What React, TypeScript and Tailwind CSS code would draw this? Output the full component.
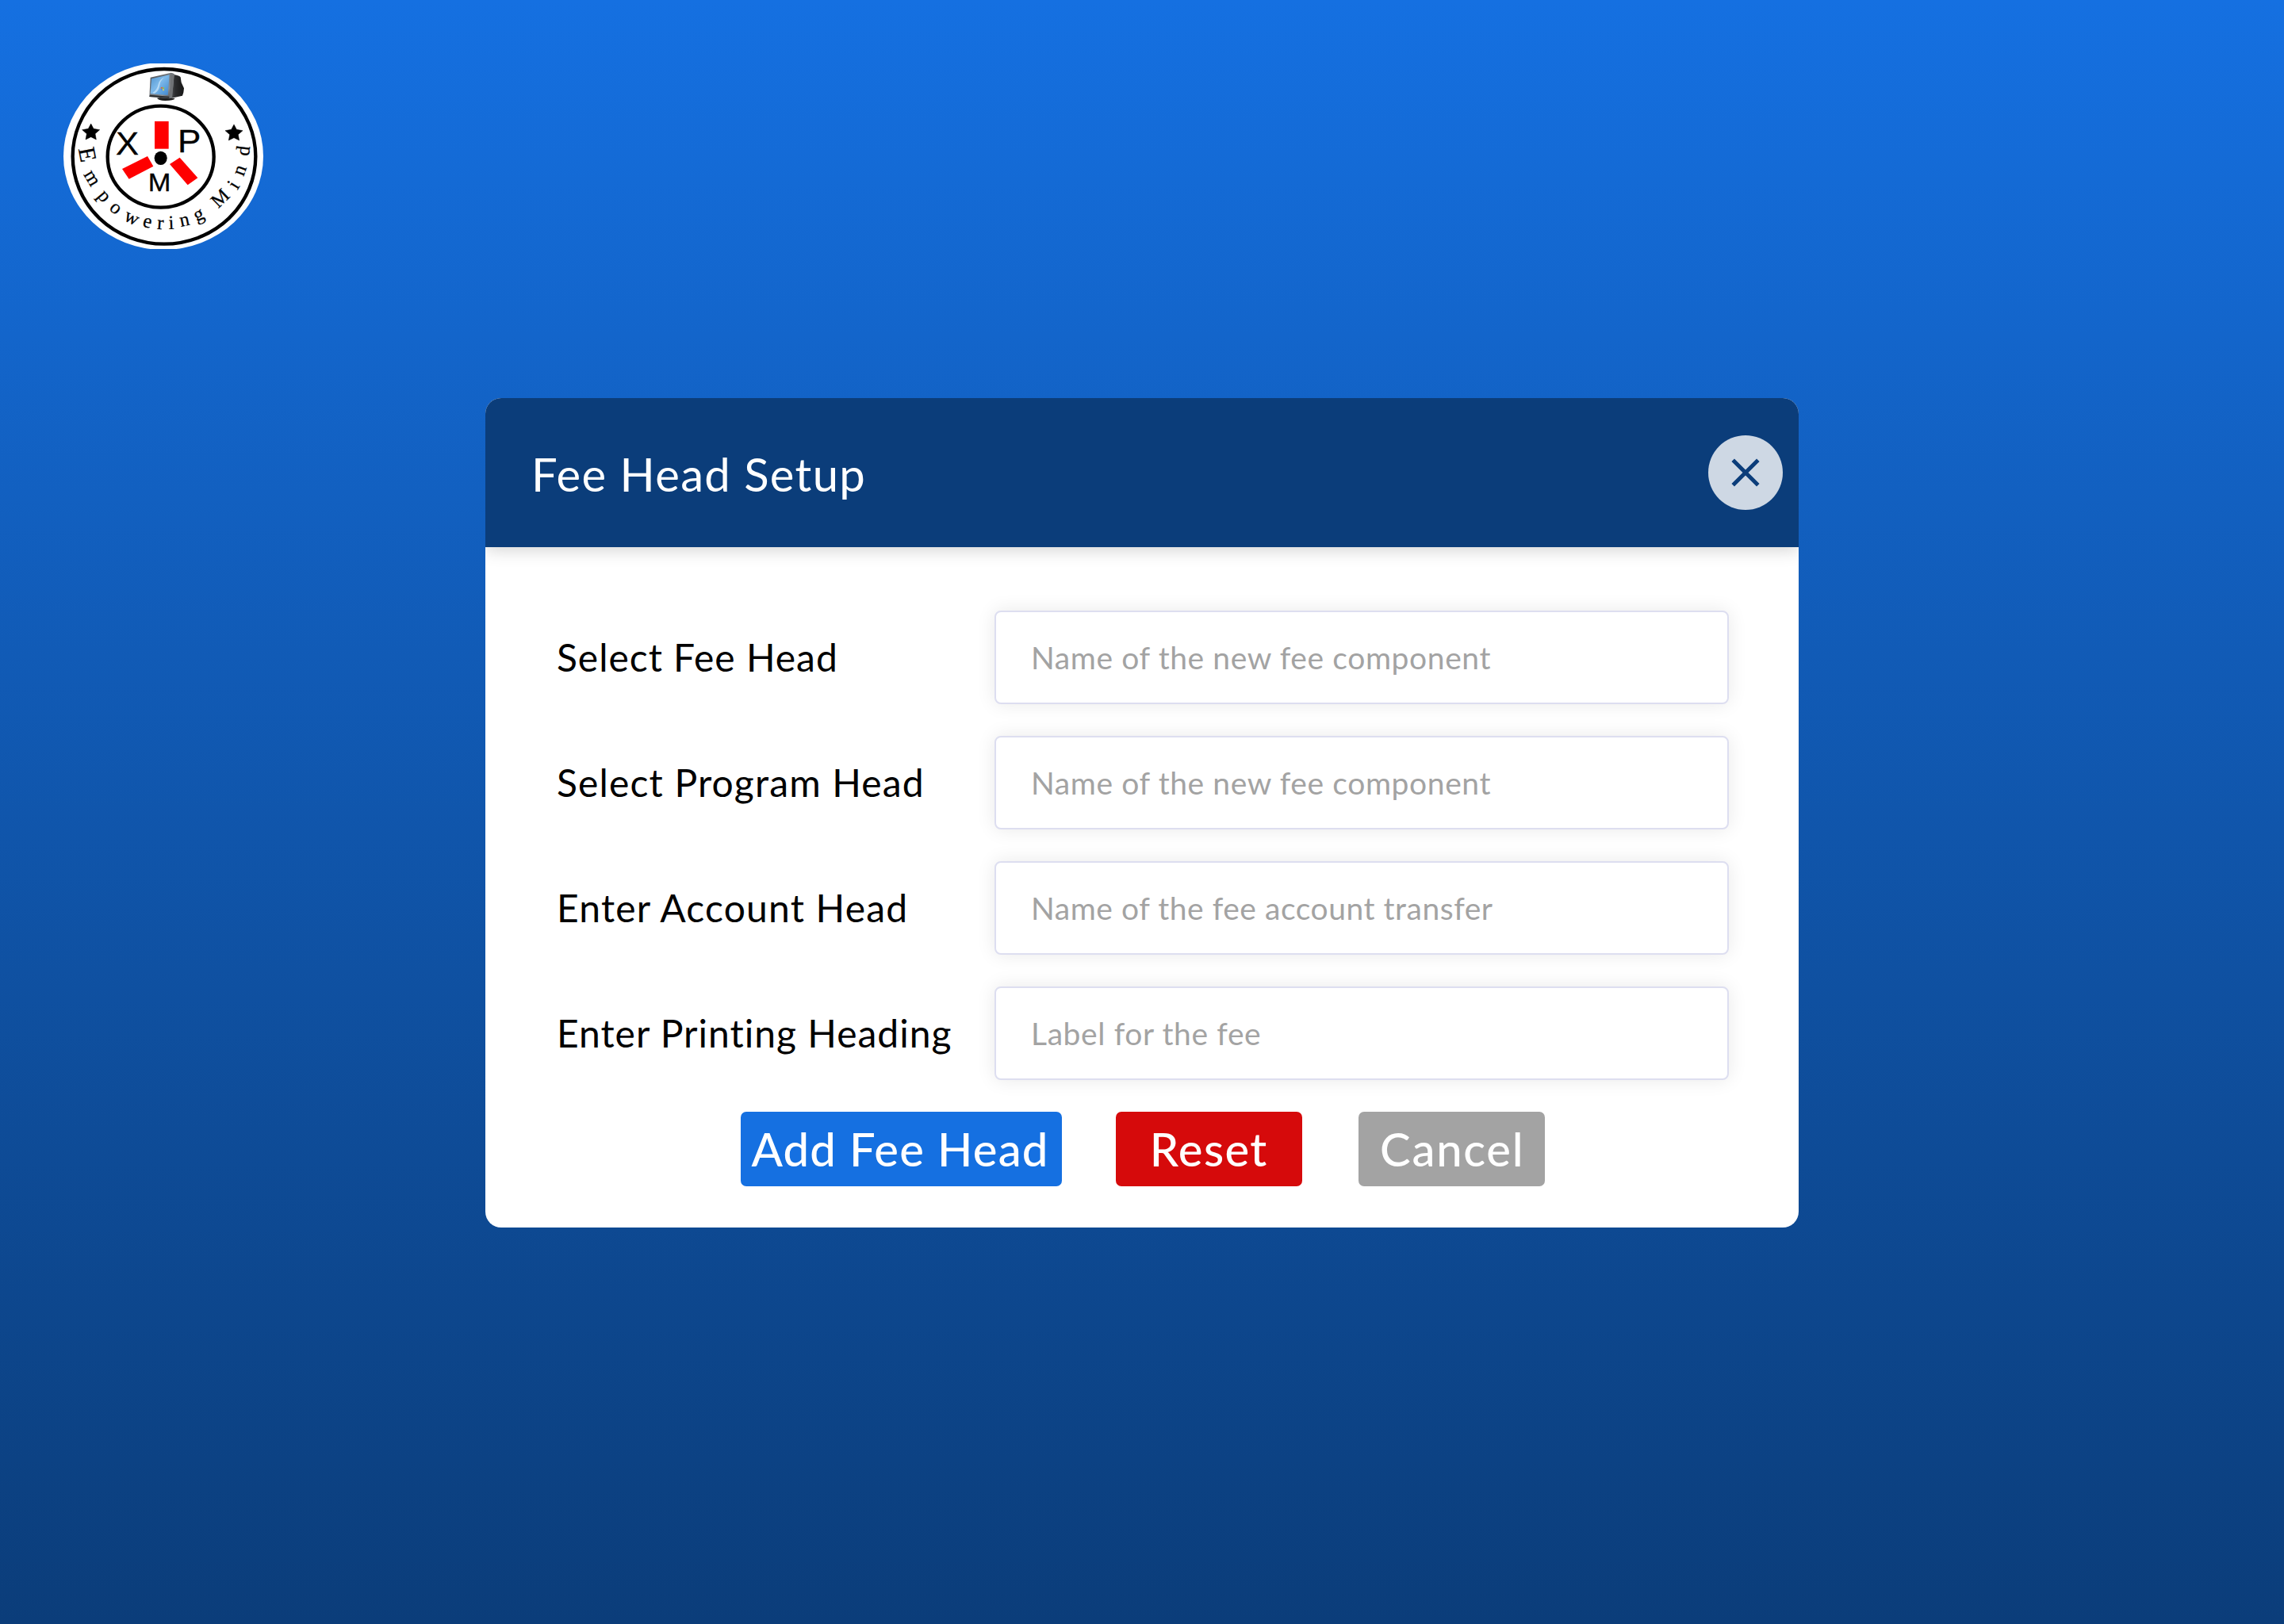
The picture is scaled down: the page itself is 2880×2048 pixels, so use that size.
type Field = { label: string; placeholder: string; labelTracking: string; hintTracking: string };

const fields: Field[] = [
  {
    label: "Select Fee Head",
    placeholder: "Name of the new fee component",
    labelTracking: "tracking-[0.96px]",
    hintTracking: "tracking-[0.6px]",
  },
  {
    label: "Select Program Head",
    placeholder: "Name of the new fee component",
    labelTracking: "tracking-[1.15px]",
    hintTracking: "tracking-[0.6px]",
  },
  {
    label: "Enter Account Head",
    placeholder: "Name of the fee account transfer",
    labelTracking: "tracking-[1.2px]",
    hintTracking: "tracking-[0.54px]",
  },
  {
    label: "Enter Printing Heading",
    placeholder: "Label for the fee",
    labelTracking: "tracking-[1px]",
    hintTracking: "tracking-[0.6px]",
  },
];

/* Baseline start (x, y) and rotation in degrees of each letter of the badge's motto. */
const motto: [number, number, number][] = [
  [86, 353, 79],
  [105, 450, 59],
  [156, 532, 50],
  [200, 581, 40],
  [255, 622, 26],
  [327, 646, 14],
  [383, 656, 4],
  [428, 657, -2],
  [474, 648, -12],
  [533, 629, -24],
  [580, 605, -30],
  [616, 580, -44],
  [688, 511, -58],
  [711, 459, -70],
  [731, 382, -83],
];

function Star({ x, y }: { x: number; y: number }) {
  return (
    <path
      transform={`translate(${x} ${y})`}
      d="M0-31 10-12 33-8 16 7 20 29 0 19-20 29-16 7-33-8-10-12Z"
      fill="#000"
      stroke="#000"
      strokeWidth="1.5"
    />
  );
}

function Computer() {
  return (
    <g>
      <defs>
        <linearGradient id="screen" x1="0" y1="0" x2="1" y2="1">
          <stop offset="0" stopColor="#4f93cf" />
          <stop offset="0.45" stopColor="#7db9ea" />
          <stop offset="1" stopColor="#3f86cc" />
        </linearGradient>
        <linearGradient id="bezel" x1="0" y1="0" x2="1" y2="1">
          <stop offset="0" stopColor="#4a4f55" />
          <stop offset="0.7" stopColor="#8b8f93" />
          <stop offset="1" stopColor="#3a3c3f" />
        </linearGradient>
        <linearGradient id="case" x1="0" y1="0" x2="1" y2="0">
          <stop offset="0" stopColor="#5d5f62" />
          <stop offset="0.4" stopColor="#2c2d2f" />
          <stop offset="1" stopColor="#161616" />
        </linearGradient>
      </defs>
      <path d="M384 161Q405 156 430 158L452 163Q446 171 415 171 388 170 384 161Z" fill="#1f1f1f" />
      <path d="M445 72Q466 74 473 82L476 102 486 124 484 140 480 152 446 160 430 160Z" fill="url(#case)" />
      <path d="M359 83 437 65 449 70 441 160 430 163 355 156Z" fill="url(#bezel)" />
      <path d="M437 65 449 70 441 160 430 163Z" fill="#707376" />
      <path d="M363 88 431 73 425 150 359 145Z" fill="url(#screen)" />
      <path d="M366 142Q385 130 389 108 392 92 412 82 394 98 394 114 391 135 374 144Z" fill="#c9e5fa" opacity=".75" />
      <path d="M399 120 405 119 404 125 398 125Z" fill="#e0663a" />
      <path d="M406 120 412 121 411 127 405 126Z" fill="#8cc152" />
      <path d="M398 126 404 127 404 132 398 131Z" fill="#4a90e2" />
      <path d="M405 127 411 128 410 133 405 132Z" fill="#f6d13c" />
      <path d="M357 149 430 155 430 161 355 156Z" fill="#2f3133" />
    </g>
  );
}

function Logo() {
  return (
    <svg viewBox="30 30 756 702" className="h-[234px] w-[252px] overflow-hidden" aria-label="XPM Empowering Mind">
      <ellipse cx="408" cy="381" rx="378" ry="354" fill="#fff" />
      <ellipse cx="411" cy="382" rx="346" ry="331" fill="none" stroke="#000" strokeWidth="13" />
      <ellipse cx="398" cy="383" rx="201" ry="192" fill="none" stroke="#000" strokeWidth="13" />
      <Computer />
      <Star x={134} y={289} />
      <Star x={675} y={292} />
      <path d="M375 249H428V353H375Z" fill="#f00" />
      <path d="M252 429 348 381 370 419 278 467Z" fill="#f00" />
      <path d="M432 411 470 386 538 463 500 490Z" fill="#f00" />
      <ellipse cx="398" cy="388" rx="24" ry="26" fill="#000" />
      <g fontFamily="'Liberation Sans', sans-serif" fill="#000" stroke="#000" strokeWidth="1">
        <text x="228" y="374" fontSize="124" textLength="87" lengthAdjust="spacingAndGlyphs">
          X
        </text>
        <text x="462" y="367" fontSize="121" textLength="88" lengthAdjust="spacingAndGlyphs">
          P
        </text>
        <text x="350" y="514" fontSize="96" textLength="86" lengthAdjust="spacingAndGlyphs">
          M
        </text>
      </g>
      <text
        fontFamily="'Liberation Serif', serif"
        fontSize="74"
        fill="#000"
        stroke="#000"
        strokeWidth="0.8"
        x={motto.map((m) => m[0]).join(" ")}
        y={motto.map((m) => m[1]).join(" ")}
        rotate={motto.map((m) => m[2]).join(" ")}
      >
        <tspan fontSize="90">E</tspan>mpowering Mind
      </text>
    </svg>
  );
}

export default function App() {
  return (
    <main className="flex h-[2048px] w-[2880px] flex-col overflow-hidden bg-linear-to-b from-[#1570e1] to-[#0b3d7a] px-20 pt-20 font-[Lato,sans-serif]">
      <Logo />

      <section className="mx-auto mt-[188px] h-[1046px] w-[1656px] shrink-0 overflow-hidden rounded-[20px] bg-white">
        <header className="flex h-[188px] items-center justify-between bg-[#0b3d7a] pr-5 pl-[58px] shadow-[0_4px_20px_rgba(0,0,0,0.17)]">
          <h1 className="pt-[3px] text-[58px] leading-[70px] tracking-[1.3px] text-white">Fee Head Setup</h1>
          <button
            type="button"
            aria-label="Close"
            className="flex size-[94px] items-center justify-center rounded-full bg-[#ced8e4]"
          >
            <svg viewBox="0 0 36 36" className="size-9" fill="none" stroke="#0b3d7a" strokeWidth="5">
              <path d="M2.2 2.2 33.8 33.8M33.8 2.2 2.2 33.8" />
            </svg>
          </button>
        </header>

        <form>
          <div className="flex flex-col gap-10 pt-20 pr-[88px] pl-[90px]">
            {fields.map((field) => (
              <label key={field.label} className="flex h-[118px] items-center justify-between">
                <span className={`pb-px text-[48px] leading-[58px] whitespace-nowrap text-black ${field.labelTracking}`}>
                  {field.label}
                </span>
                <input
                  type="text"
                  placeholder={field.placeholder}
                  className={`h-[118px] w-[926px] rounded-lg border-2 border-[#dddef0] bg-white px-11 text-[39px] shadow-[0_0_24px_rgba(0,0,0,0.09)] placeholder:text-[#a3a3a3] ${field.hintTracking}`}
                />
              </label>
            ))}
          </div>

          <div className="mt-10 flex pl-[322px] text-[58px] font-medium text-white">
            <button type="button" className="h-[94px] w-[405px] rounded-[7px] bg-[#1570e1] pr-[3px] pb-0.5 tracking-[1.2px]">
              Add Fee Head
            </button>
            <button type="button" className="ml-[67.5px] h-[94px] w-[235.5px] rounded-[7px] bg-[#d60a0b] pb-0.5 tracking-[1.4px]">
              Reset
            </button>
            <button type="button" className="ml-[70.5px] h-[94px] w-[235.5px] rounded-[7px] bg-[#a3a3a3] pb-0.5 pl-0.5 tracking-[1.76px]">
              Cancel
            </button>
          </div>
        </form>
      </section>
    </main>
  );
}
